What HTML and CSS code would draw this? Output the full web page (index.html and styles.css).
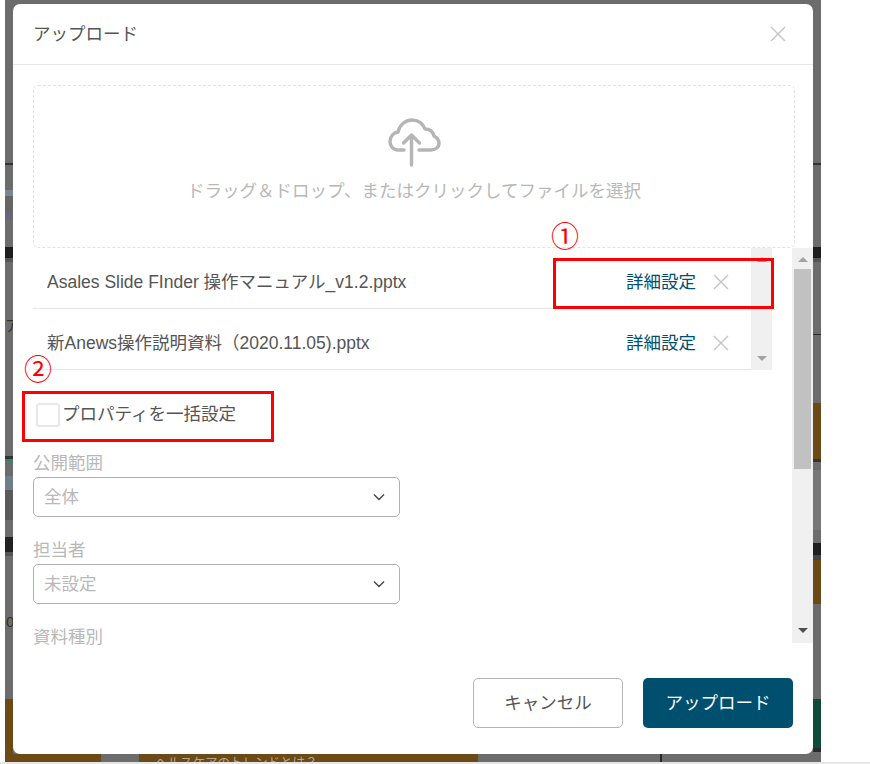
FILE: index.html
```html
<!DOCTYPE html>
<html lang="ja">
<head>
  <meta charset="UTF-8" />
  <title>アップロード</title>
  <link rel="stylesheet" href="styles.css">
</head>
<body>

  <div class="backdrop">
    <span class="behind behind-left-1">ア</span>
    <span class="behind behind-left-2">0</span>
    <span class="behind behind-bottom">ヘルスケアのトレンドとは？</span>

    <div class="modal">
      <div class="modal-header">
        <span class="modal-title">アップロード</span>
        <svg class="icon-close" width="16" height="16" viewBox="0 0 16 16"><path d="M1 1L15 15M15 1L1 15"/></svg>
      </div>

      <div class="dropzone">
        <svg class="icon-cloud" width="54" height="50" viewBox="0 0 54 50">
          <path d="M17 32H11C6 32 3 28 3 23.5C3 18 7 14.5 11 14C13 6 19 2 25 2C31 2 36 5.5 38 11C43 11 46 14 47 18C50 19.5 52 22.5 52 25.5C52 29.5 48 32 44 32H32"/>
          <path d="M24.5 47V17M16.5 25L24.5 17L32.5 25"/>
        </svg>
        <p class="dropzone-text">ドラッグ＆ドロップ、またはクリックしてファイルを選択</p>
      </div>

      <div class="scroll-area">
        <div class="scroll-content">
          <div class="file-list">
            <div class="file-rows">
              <div class="file-row">
                <span class="file-name">Asales Slide FInder 操作マニュアル_v1.2.pptx</span>
                <a class="file-detail">詳細設定</a>
                <svg class="icon-remove" width="16" height="16" viewBox="0 0 16 16"><path d="M1 1L15 15M15 1L1 15"/></svg>
              </div>
              <div class="file-row">
                <span class="file-name">新Anews操作説明資料（2020.11.05).pptx</span>
                <a class="file-detail">詳細設定</a>
                <svg class="icon-remove" width="16" height="16" viewBox="0 0 16 16"><path d="M1 1L15 15M15 1L1 15"/></svg>
              </div>
            </div>
            <div class="scrollbar scrollbar-inner">
              <span class="arrow-up arrow-faint"></span>
              <span class="arrow-down arrow-faint"></span>
            </div>
          </div>

          <label class="bulk-row">
            <span class="checkbox"></span>
            <span class="bulk-text">プロパティを一括設定</span>
          </label>

          <div class="field">
            <div class="field-label">公開範囲</div>
            <div class="select">
              <span class="select-value">全体</span>
              <svg class="icon-chevron" width="12" height="8" viewBox="0 0 12 8"><path d="M1 1.5L6 6.5L11 1.5"/></svg>
            </div>
          </div>
          <div class="field">
            <div class="field-label">担当者</div>
            <div class="select">
              <span class="select-value">未設定</span>
              <svg class="icon-chevron" width="12" height="8" viewBox="0 0 12 8"><path d="M1 1.5L6 6.5L11 1.5"/></svg>
            </div>
          </div>
          <div class="field">
            <div class="field-label">資料種別</div>
          </div>
        </div>

        <div class="scrollbar scrollbar-outer">
          <span class="arrow-up arrow-faint"></span>
          <div class="scrollbar-track"><div class="scrollbar-thumb"></div></div>
          <span class="arrow-down"></span>
        </div>
      </div>

      <div class="modal-footer">
        <button class="button button-cancel">キャンセル</button>
        <button class="button button-upload">アップロード</button>
      </div>
    </div>

    <!-- red annotations over the screenshot -->
    <div class="note-box note-box-1"></div>
    <div class="note-box note-box-2"></div>
    <span class="note-num note-num-1">①</span>
    <span class="note-num note-num-2">②</span>
  </div>

  <div class="page-edge"></div>

</body>
</html>
```

FILE: styles.css
```css
body {
  margin: 0;
  background-color: #ffffff;
  font-family: "Liberation Sans", "Noto Sans CJK JP", sans-serif;
  font-size: 17.5px;
  color: #555555;
}
.backdrop {
  position: relative;
  box-sizing: border-box;
  width: 816px;
  height: 762px;
  margin-left: 5px;
  padding: 4px 8px;
  overflow: hidden;
  background-color: #6c6c6c;
  background-repeat: no-repeat;
  background-size: 8px 100%, 8px 100%, 100% 8px;
  background-position: left top, right top, left bottom;
  background-image:
    linear-gradient(to bottom,
      transparent 163px, #333 163px, #333 165px, transparent 165px,
      transparent 190px, #7d8590 190px, #7d8590 196px, #666 196px, #666 212px, #667 212px, #667 220px, transparent 220px,
      transparent 247px, #1e1e1e 247px, #1e1e1e 258px, #555 258px, #555 262px, transparent 262px,
      transparent 456px, #333 456px, #333 459px, #4d7a68 459px, #4d7a68 463px, transparent 463px,
      transparent 476px, #6f7f88 476px, #6f7f88 490px, #5a5a5a 490px, #5a5a5a 520px, transparent 520px,
      transparent 537px, #222 537px, #222 552px, #555 552px, #555 556px, transparent 556px,
      transparent 699px, #6b4a18 699px, #6b4a18 762px),
    linear-gradient(to bottom,
      transparent 163px, #333 163px, #333 165px, transparent 165px,
      transparent 247px, #1e1e1e 247px, #1e1e1e 258px, #555 258px, #555 262px, transparent 262px,
      transparent 334px, #2a2a2a 334px, #2a2a2a 335px, transparent 335px,
      transparent 403px, #6b4a18 403px, #6b4a18 459px, #333 459px, #333 462px, transparent 462px,
      transparent 470px, #777 470px, #777 530px, transparent 530px,
      transparent 543px, #1e1e1e 543px, #1e1e1e 555px, #444 555px, #444 560px, #6b4a18 560px, #6b4a18 604px, transparent 604px,
      transparent 699px, #0f4a3a 699px, #0f4a3a 748px, #2a2a2a 748px, #2a2a2a 752px, transparent 752px),
    linear-gradient(to right,
      #6b4a18 96px, #6c6c6c 96px, #6c6c6c 134px, #6b4a18 134px, #6b4a18 473px, #6c6c6c 473px,
      #6c6c6c 655px, #2a2a2a 655px, #2a2a2a 657px, #6c6c6c 657px);
}
.behind {
  position: absolute;
  color: #333333;
}
.behind-left-1 {
  left: 0;
  top: 314px;
  font-size: 15px;
}
.behind-left-2 {
  left: 1px;
  top: 613px;
  font-size: 15px;
}
.behind-bottom {
  left: 150px;
  top: 752px;
  font-size: 12.5px;
  color: #b8a684;
}
.modal {
  position: relative;
  display: flex;
  flex-direction: column;
  box-sizing: border-box;
  width: 800px;
  height: 750px;
  background-color: #ffffff;
  border-radius: 7px;
}
.modal-header {
  display: flex;
  justify-content: space-between;
  align-items: center;
  box-sizing: border-box;
  height: 61px;
  padding: 0 27px 0 20px;
  border-bottom: 1px solid #e6e6e6;
}
.modal-title {
  padding-bottom: 4px;
  color: #555555;
}
.icon-close path,
.icon-remove path {
  fill: none;
  stroke: #c4c4c4;
  stroke-width: 1.4;
}
.dropzone {
  display: flex;
  flex-direction: column;
  align-items: center;
  box-sizing: border-box;
  width: 762px;
  height: 163px;
  margin: 20px 0 0 20px;
  padding-top: 32px;
  border: 1px dashed #e2e2e2;
  border-radius: 5px;
}
.icon-cloud path {
  fill: none;
  stroke: #b5b5b5;
  stroke-width: 3.4;
  stroke-linecap: round;
  stroke-linejoin: round;
}
.dropzone-text {
  margin: 10px 0 0;
  line-height: 26px;
  color: #b8b8b8;
}
.scroll-area {
  display: flex;
  height: 395px;
}
.scroll-content {
  flex: 1;
  padding-left: 20px;
}
.file-list {
  display: flex;
  width: 739px;
}
.file-rows {
  flex: 1;
}
.file-row {
  display: flex;
  align-items: center;
  box-sizing: border-box;
  height: 61px;
  padding: 0 22px 0 14px;
  border-bottom: 1px solid #e6e6e6;
}
.file-name {
  flex: 1;
  padding-top: 4px;
}
.file-detail {
  margin-right: 17px;
  padding-top: 4px;
  color: #004f6e;
}
.icon-remove {
  margin-top: 8px;
}
.scrollbar {
  display: flex;
  flex-direction: column;
  align-items: center;
  justify-content: space-between;
  background-color: #f0f0f0;
}
.scrollbar-inner {
  width: 21px;
  box-sizing: border-box;
  padding: 9px 0;
}
.scrollbar-outer {
  width: 21px;
  padding: 9px 0 10px;
  box-sizing: border-box;
}
.scrollbar-track {
  flex: 1;
  width: 100%;
  margin-top: 7px;
}
.scrollbar-thumb {
  width: 17px;
  height: 200px;
  margin-left: 2px;
  background-color: #c1c1c1;
}
.arrow-up,
.arrow-down {
  width: 0;
  height: 0;
  border-left: 5px solid transparent;
  border-right: 5px solid transparent;
}
.arrow-up {
  border-bottom: 5px solid #505050;
}
.arrow-down {
  border-top: 5px solid #505050;
}
.arrow-up.arrow-faint {
  border-bottom-color: #a3a3a3;
}
.arrow-down.arrow-faint {
  border-top-color: #a3a3a3;
}
.bulk-row {
  display: flex;
  align-items: center;
  gap: 2px;
  margin: 33px 0 0 3px;
  height: 24px;
}
.bulk-text {
  padding-bottom: 5px;
}
.checkbox {
  box-sizing: border-box;
  width: 24px;
  height: 24px;
  border: 2px solid #e8e8e8;
  border-radius: 3px;
}
.field {
  margin-top: 21px;
  width: 367px;
}
.bulk-row + .field {
  margin-top: 24px;
}
.field-label {
  height: 24px;
  line-height: 24px;
  margin-bottom: 2px;
  color: #b8b8b8;
}
.select {
  display: flex;
  justify-content: space-between;
  align-items: center;
  box-sizing: border-box;
  height: 40px;
  padding: 0 14px 0 10px;
  border: 1px solid #b0b0b0;
  border-radius: 5px;
  color: #b8b8b8;
}
.select-value {
  padding-bottom: 3px;
}
.icon-chevron path {
  fill: none;
  stroke: #444444;
  stroke-width: 1.4;
}
.modal-footer {
  display: flex;
  justify-content: flex-end;
  gap: 20px;
  padding: 35px 20px 0 0;
}
.button {
  box-sizing: border-box;
  width: 150px;
  height: 50px;
  padding-bottom: 5px;
  border-radius: 5px;
  font-family: inherit;
  font-size: 17.5px;
}
.button-cancel {
  background-color: #ffffff;
  border: 1px solid #b5b5b5;
  color: #555555;
}
.button-upload {
  background-color: #004f6e;
  border: none;
  color: #ffffff;
}
.note-box {
  position: absolute;
  box-sizing: border-box;
  border: 3px solid #ff0000;
}
.note-box-1 {
  left: 548px;
  top: 258px;
  width: 221px;
  height: 51px;
}
.note-box-2 {
  left: 17px;
  top: 391px;
  width: 252px;
  height: 51px;
}
.note-num {
  position: absolute;
  color: #ff0000;
  font-size: 28px;
  line-height: 30px;
}
.note-num-1 {
  left: 546px;
  top: 223px;
}
.note-num-2 {
  left: 19px;
  top: 356px;
}
.page-edge {
  height: 2px;
  background-color: #e6e6e6;
}
```
